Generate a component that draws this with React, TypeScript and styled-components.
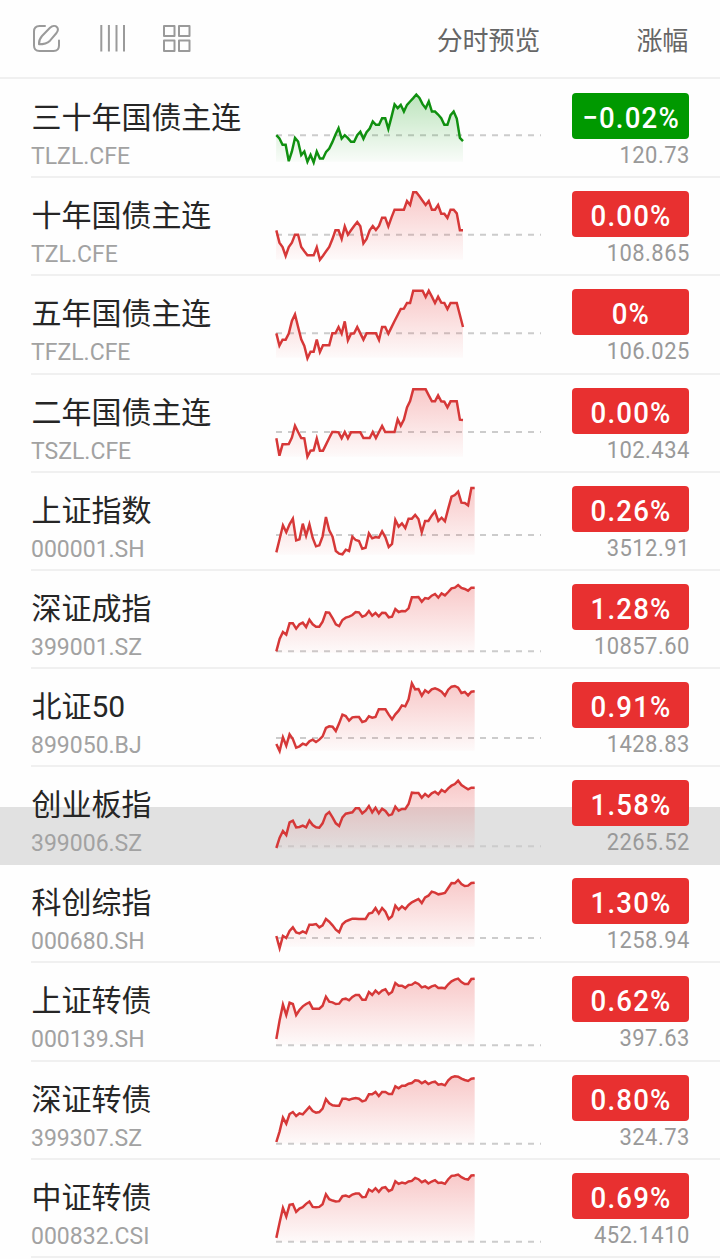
import React from "react";
import styled, { createGlobalStyle } from "styled-components";

const GlobalStyle = createGlobalStyle`
  body {
    margin: 0;
    background: #fefefe;
    font-family: Roboto, "Noto Sans CJK SC", sans-serif;
  }
`;

const Page = styled.main`
  width: 720px;
  height: 1259px;
  overflow: hidden;
`;

const Header = styled.header`
  box-sizing: border-box;
  height: 79px;
  margin-bottom: 1.15px;
  padding: 0 32px 0 32px;
  display: flex;
  align-items: center;
  border-bottom: 2px solid #f0f0f0;
  color: #666;
  font-size: 26px;
  line-height: 38px;
`;

const Tools = styled.div`
  display: flex;
  flex: 1;
`;

const Icon = styled.svg`
  display: block;
  fill: none;
  stroke: #9a9a9a;
  stroke-width: 2;
  stroke-linecap: round;
  stroke-linejoin: round;
`;

const Heading = styled.span<{ $width: number }>`
  width: ${(p) => p.$width}px;
  text-align: right;
  padding-top: 5px;
  letter-spacing: -0.2px;
`;

const Row = styled.section<{ $shaded?: boolean }>`
  height: 98.15px;
  padding-left: 31px;
  background: ${(p) =>
    p.$shaded ? "linear-gradient(transparent 40.3px, #e1e1e1 40.3px)" : "none"};
`;

const RowBody = styled.div<{ $shaded?: boolean }>`
  box-sizing: border-box;
  height: 100%;
  display: grid;
  grid-template-columns: 239px 275px 144px;
  border-bottom: 2px solid ${(p) => (p.$shaded ? "transparent" : "#f0f0f0")};
`;

const Names = styled.div`
  display: flex;
  flex-direction: column;
  padding-top: 16px;
`;

const Name = styled.div`
  padding-left: 0.6px;
  font-size: 30px;
  line-height: 44px;
  letter-spacing: -0.05px;
  color: #262626;
  white-space: nowrap;
`;

const Code = styled.div`
  font-size: 23px;
  line-height: 30px;
  margin-top: 2px;
  color: #a2a2a2;
  letter-spacing: 0;
`;

const Quote = styled.div`
  display: flex;
  flex-direction: column;
  align-items: flex-end;
  padding-top: 13px;
`;

const Badge = styled.div<{ $down?: boolean }>`
  width: 117px;
  height: 46px;
  border-radius: 4px;
  background: ${(p) => (p.$down ? "#009900" : "#e83030")};
  color: #fff;
  font-size: 30px;
  font-weight: 500;
  line-height: 50px;
  text-align: center;
`;

const Change = styled.span`
  display: inline-block;
  letter-spacing: 1.3px;
  margin-right: -1.3px;
  transform: scaleX(0.92);
  white-space: nowrap;
`;

const Price = styled.div`
  font-size: 24px;
  line-height: 30px;
  margin-top: 1px;
  color: #999;
  letter-spacing: 0.5px;
  margin-right: -0.5px;
  transform: scaleX(0.915);
  transform-origin: right center;
`;

const Chart = styled.svg`
  display: block;
  width: 275px;
  height: 96px;
`;

interface Instrument {
  name: string;
  code: string;
  change: string;
  price: string;
  origin: number;
  base: number;
  short?: boolean;
  down?: boolean;
  shaded?: boolean;
  points: number[];
}

// Chart values are in thirds of a pixel, measured downwards from `origin`.
const instruments: Instrument[] = [
  {
    name: "三十年国债主连", code: "TLZL.CFE", change: "−0.02%", price: "120.73", origin: 0.5, base: 166, short: true, down: true,
    points: [166,176,195,195,244,215,174,185,226,215,246,225,248,215,236,236,216,206,187,165,145,176,166,175,186,186,166,156,177,157,146,125,135,135,115,115,147,112,74,85,75,95,75,65,55,44,54,73,85,65,95,95,104,115,135,135,106,95,116,174,184],
  },
  {
    name: "十年国债主连", code: "TZL.CFE", change: "0.00%", price: "108.865", origin: 1, base: 171, short: true,
    points: [158,195,208,235,208,195,171,171,208,221,233,233,233,209,246,234,221,208,185,158,158,184,146,171,158,145,133,146,197,184,158,145,157,145,120,120,146,120,96,96,96,96,70,82,44,44,56,69,82,70,96,96,82,108,108,121,96,96,107,158,158],
  },
  {
    name: "五年国债主连", code: "TFZL.CFE", change: "0%", price: "106.025", origin: 295, base: 467, short: true,
    points: [467,504,486,486,468,430,410,448,485,505,542,522,522,486,523,503,503,503,467,467,448,468,431,488,468,467,448,467,486,467,467,467,467,487,448,448,468,449,430,412,394,393,376,376,339,339,339,339,358,339,357,376,357,375,376,394,376,376,376,412,448],
  },
  {
    name: "二年国债主连", code: "TSZL.CFE", change: "0.00%", price: "102.434", origin: 2, base: 173, short: true,
    points: [192,244,210,210,209,190,154,173,191,192,247,229,228,193,229,229,210,191,173,173,174,192,173,192,174,174,174,174,191,191,191,173,191,173,155,173,173,173,173,135,154,136,99,80,45,45,45,45,45,63,81,81,63,81,82,99,81,81,81,136,137],
  },
  {
    name: "上证指数", code: "000001.SH", change: "0.26%", price: "3512.91", origin: 296, base: 482,
    points: [534,494,453,474,450,433,498,495,448,484,450,491,516,513,486,428,468,487,530,538,540,526,530,487,497,500,523,520,477,492,488,490,471,489,518,509,437,457,447,461,433,433,422,434,474,440,440,424,411,440,430,441,403,367,362,352,385,386,393,341,341],
  },
  {
    name: "深证成指", code: "399001.SZ", change: "1.28%", price: "10857.60", origin: 3, base: 244,
    points: [244,207,186,194,160,160,176,163,158,171,149,163,170,170,155,127,128,144,163,168,150,143,140,135,126,127,140,136,123,137,129,139,128,129,142,140,117,126,123,124,115,82,82,81,95,84,86,77,72,83,70,76,66,55,53,45,54,57,62,53,53],
  },
  {
    name: "北证50", code: "899050.BJ", change: "0.91%", price: "1428.83", origin: 297, base: 504,
    points: [522,543,502,527,493,507,533,529,521,525,514,509,516,509,499,474,469,470,483,460,434,438,452,442,441,441,456,453,439,443,441,418,418,418,434,448,433,422,406,409,388,340,358,357,377,361,368,358,355,359,365,377,359,350,348,353,369,366,376,365,364],
  },
  {
    name: "创业板指", code: "399006.SZ", change: "1.58%", price: "2265.52", origin: 4, base: 242, shaded: true,
    points: [247,216,196,208,170,165,185,184,180,185,165,178,185,186,173,147,139,155,173,181,155,144,142,140,128,128,143,135,121,140,126,143,129,136,149,146,123,135,130,130,115,81,82,82,96,85,93,83,78,86,73,79,68,60,55,45,58,65,71,66,66],
  },
  {
    name: "科创综指", code: "000680.SH", change: "1.30%", price: "1258.94", origin: 298, base: 517,
    points: [511,547,511,517,496,485,500,503,497,502,477,477,475,485,479,460,468,479,492,500,476,467,463,459,459,460,460,460,444,441,427,443,427,438,460,452,420,432,422,430,418,410,405,400,412,395,390,378,381,386,384,382,367,352,353,343,355,361,360,352,351],
  },
  {
    name: "上证转债", code: "000139.SH", change: "0.62%", price: "397.63", origin: 3, base: 250,
    points: [231,175,128,159,122,126,159,144,133,126,121,140,140,140,131,104,119,121,126,125,112,110,115,105,99,99,113,113,90,99,86,95,86,82,97,90,63,71,71,77,69,68,61,66,76,73,79,73,70,78,77,79,67,58,53,50,60,66,66,51,50],
  },
  {
    name: "深证转债", code: "399307.SZ", change: "0.80%", price: "324.73", origin: 300, base: 545,
    points: [540,508,467,485,456,450,462,454,457,446,435,447,452,450,440,411,424,430,431,431,410,410,414,410,408,410,418,415,397,397,390,402,390,390,396,396,373,379,371,371,365,363,355,356,364,358,366,361,359,368,366,370,355,346,343,344,350,354,357,350,349],
  },
  {
    name: "中证转债", code: "000832.CSI", change: "0.69%", price: "452.1410", origin: 29.4, base: 275,
    points: [263,217,173,199,164,162,185,175,171,161,154,170,171,170,162,132,147,151,154,153,138,136,140,133,130,130,141,140,118,124,114,125,113,111,123,118,93,101,97,100,94,92,83,87,96,91,100,94,90,98,97,101,87,77,76,73,81,86,88,76,75],
  },
];

function Sparkline({ item }: { item: Instrument }) {
  const end = item.short ? 579 : 614;
  const step = (end - 19) / (item.points.length - 1);
  const line = item.points
    .map((v, i) => `${(19 + i * step).toFixed(1)},${(v - item.origin).toFixed(1)}`)
    .join(" ");
  const color = item.down ? "#109010" : "#d63838";
  const fill = item.down ? "#009900" : "#e83030";
  const id = `fill-${item.code}`;
  const base = item.base - item.origin;
  return (
    <Chart viewBox="0 0 825 288">
      <defs>
        <linearGradient id={id} gradientUnits="userSpaceOnUse" x1="0" y1="43" x2="0" y2="245">
          <stop offset="0" stopColor={fill} stopOpacity="0.26" />
          <stop offset="1" stopColor={fill} stopOpacity="0.02" />
        </linearGradient>
      </defs>
      <path d={`M18 ${base}H813`} stroke="#ccc" strokeWidth="6" strokeDasharray="18 18" />
      <polygon points={`18,245 ${line} ${end},245`} fill={`url(#${id})`} />
      <polyline points={line} fill="none" stroke={color} strokeWidth="7.4" strokeLinejoin="miter" />
    </Chart>
  );
}

export default function App() {
  return (
    <>
      <GlobalStyle />
      <Page>
        <Header>
          <Tools>
            <Icon width="160" height="30" viewBox="32 24 160 30">
              <path d="M45 26H39.500Q34 26 34 31.500V45.500Q34 51 39.500 51H53.500Q59 51 59 45.500V40.500" />
              <path d="M39 44.300C38.800 41 39.800 38.500 42 36L50 27.800C52.500 25.600 55.500 25.600 57 27.200C58.300 28.700 58 31 56.500 33L50 40.700C47 43.500 43 44.300 39 44.300Z" />
              <path d="M101.300 25V51.500 M108.900 25V51.500 M116.500 25V51.500 M124 25V51.500" strokeLinecap="butt" />
              <path d="M164 26H174.500V36H164Z M179 26H189.500V36H179Z M164 40.500H174.500V51H164Z M179 40.500H189.500V51H179Z" />
            </Icon>
          </Tools>
          <Heading $width={150}>分时预览</Heading>
          <Heading $width={148}>涨幅</Heading>
        </Header>
        {instruments.map((item) => (
          <Row key={item.code} $shaded={item.shaded}>
            <RowBody $shaded={item.shaded}>
              <Names>
                <Name>{item.name}</Name>
                <Code>{item.code}</Code>
              </Names>
              <Sparkline item={item} />
              <Quote>
                <Badge $down={item.down}>
                  <Change>{item.change}</Change>
                </Badge>
                <Price>{item.price}</Price>
              </Quote>
            </RowBody>
          </Row>
        ))}
      </Page>
    </>
  );
}
